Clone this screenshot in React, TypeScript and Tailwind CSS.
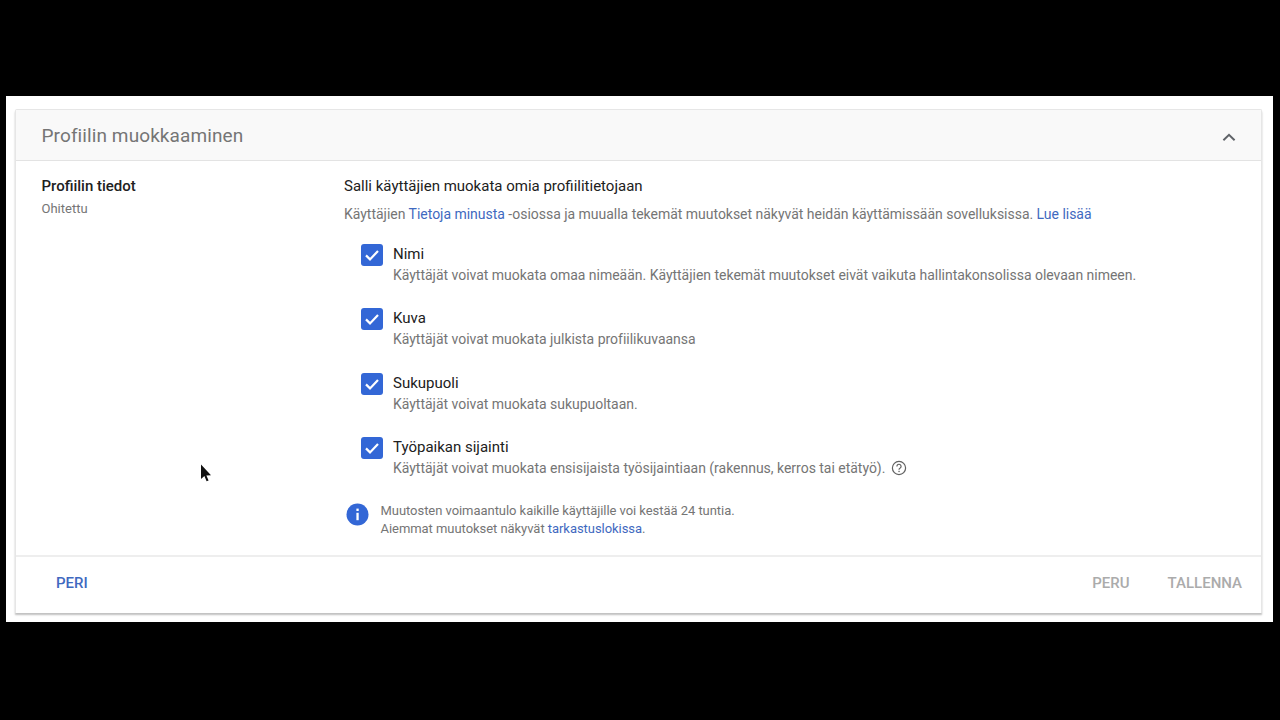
import React from "react";

function Check() {
  return (
    <div className="w-[22px] h-[22px] rounded-[3px] bg-[#3367d6] flex items-center justify-center shrink-0">
      <svg width="18" height="18" viewBox="0 0 18 18" fill="none">
        <path d="M3 9.4 L7 13.4 L15 5" stroke="#fff" strokeWidth="2.2" />
      </svg>
    </div>
  );
}

function Row({ title, desc, help }: { title: string; desc: string; help?: boolean }) {
  return (
    <div className="flex h-[64.5px] pl-[17px] gap-[10px]">
      <div><Check /></div>
      <div>
        <div className="text-[15px] leading-[20px] text-[#212121] h-[21px]">{title}</div>
        <div className="text-[14px] leading-[20px] text-[#757575] flex items-center tracking-[-0.02px]">
          {desc}
          {help && (
            <svg className="ml-[6px]" width="16" height="16" viewBox="0 0 16 16" fill="none">
              <circle cx="8" cy="8" r="6.6" stroke="#616161" strokeWidth="1.2" />
              <path d="M5.9 6.4a2.1 2.1 0 1 1 3.3 1.7c-.8.5-1.2.9-1.2 1.7" stroke="#616161" strokeWidth="1.2" />
              <rect x="7.4" y="10.8" width="1.3" height="1.3" fill="#616161" />
            </svg>
          )}
        </div>
      </div>
    </div>
  );
}

export default function App() {
  return (
    <div className="relative w-[1280px] h-[720px] bg-black pt-[96px] pl-[6px] overflow-hidden" style={{ fontFamily: "Roboto, 'Liberation Sans', sans-serif" }}>
      <div className="w-[1267px] h-[526px] bg-white pt-[13px] pl-[9px]">
        <div className="w-[1247px] h-[504px] flex flex-col bg-white border border-[#e6e6e6] border-b-0 rounded-t-[2px] shadow-[0_2px_2px_rgba(0,0,0,0.25)]">
          <div className="h-[50.5px] shrink-0 bg-[#f9f9f9] border-b border-[#e3e3e3] flex items-center justify-between pl-[25.5px] pr-[25px]">
            <span className="text-[19px] text-[#757575] tracking-[0.1px] pt-[2px]">Profiilin muokkaaminen</span>
            <svg className="mt-[4px]" width="14" height="10" viewBox="0 0 14 10" fill="none">
              <path d="M1.4 8.2 L7 2.8 L12.6 8.2" stroke="#5f6368" strokeWidth="2" />
            </svg>
          </div>
          <div className="flex-1 flex min-h-0">
            <div className="w-[328px] shrink-0 pl-[25.5px] pt-[15px]">
              <div className="text-[15px] leading-[20px] font-medium text-[#212121]">Profiilin tiedot</div>
              <div className="text-[13px] leading-[16px] text-[#757575] mt-[5px]">Ohitettu</div>
            </div>
            <div className="flex-1 pt-[15px]">
              <div className="text-[15px] leading-[20px] text-[#212121]">Salli käyttäjien muokata omia profiilitietojaan</div>
              <div className="text-[14px] leading-[20px] text-[#757575] mt-[8px] tracking-[-0.02px]">
                Käyttäjien <span className="text-[#3f69c0]">Tietoja minusta</span> -osiossa ja muualla tekemät muutokset näkyvät heidän käyttämissään sovelluksissa. <span className="text-[#3f69c0]">Lue lisää</span>
              </div>
              <div className="mt-[20px]">
                <Row title="Nimi" desc="Käyttäjät voivat muokata omaa nimeään. Käyttäjien tekemät muutokset eivät vaikuta hallintakonsolissa olevaan nimeen." />
                <Row title="Kuva" desc="Käyttäjät voivat muokata julkista profiilikuvaansa" />
                <Row title="Sukupuoli" desc="Käyttäjät voivat muokata sukupuoltaan." />
                <Row title="Työpaikan sijainti" desc="Käyttäjät voivat muokata ensisijaista työsijaintiaan (rakennus, kerros tai etätyö)." help />
              </div>
              <div className="flex gap-[13px] pl-[2px]">
                <svg className="mt-[1px]" width="23" height="23" viewBox="0 0 23 23">
                  <circle cx="11.5" cy="11.5" r="11" fill="#3367d6" />
                  <rect x="10.4" y="5.6" width="2.3" height="2.4" fill="#fff" />
                  <rect x="10.4" y="9.8" width="2.3" height="7.4" fill="#fff" />
                </svg>
                <div className="text-[13px] leading-[18px] text-[#757575] -ml-[1.5px] tracking-[-0.05px]">
                  <div>Muutosten voimaantulo kaikille käyttäjille voi kestää 24 tuntia.</div>
                  <div>Aiemmat muutokset näkyvät <span className="text-[#3f69c0]">tarkastuslokissa</span>.</div>
                </div>
              </div>
            </div>
          </div>
          <div className="h-[58px] shrink-0 border-t-2 border-[#eeeeee] flex items-center justify-between pl-[40px] pr-[19px] pb-[3px]">
            <span className="text-[15px] font-medium text-[#3f69c0]">PERI</span>
            <div className="flex gap-[38px] text-[15px] font-medium text-[#ababab]">
              <span>PERU</span>
              <span>TALLENNA</span>
            </div>
          </div>
        </div>
      </div>
      <svg className="absolute left-[199px] top-[463px]" width="14" height="20" viewBox="0 0 14 20">
        <path d="M2 1.5 V16 L5.4 13 L7.6 18.2 L9.6 17.4 L7.4 12.4 L12 12.2 Z" fill="#111" />
      </svg>
    </div>
  );
}
